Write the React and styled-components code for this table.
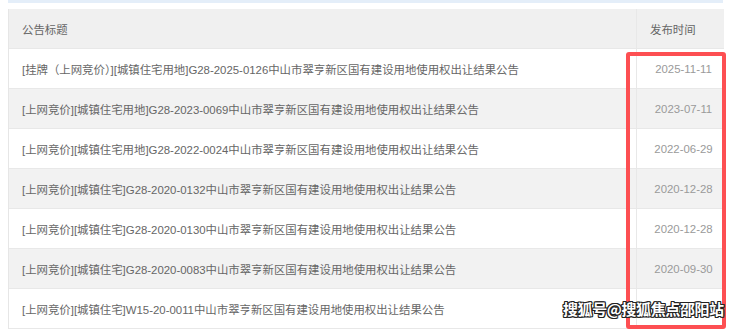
import styled, { createGlobalStyle } from "styled-components";

const GlobalStyle = createGlobalStyle`
    body {
        margin: 0;
        background: #fff;
        font-family: "Liberation Sans", "Noto Sans CJK SC", sans-serif;
    }
`

const Page = styled.div`
    position: relative;
    width: 740px;
    height: 330px;
    overflow: hidden;
    padding: 0 0 0 8px;
    box-sizing: border-box;
`

const TopStrip = styled.div`
    width: 715px;
    height: 3px;
    background: #e4eef9;
    margin-bottom: 6px;
`

const Table = styled.div`
    width: 715px;
    display: grid;
    grid-template-columns: 627px 88px;
    border-left: 1px solid #e6e6e6;
    border-right: 1px solid #e6e6e6;
    box-sizing: border-box;
`

const Cell = styled.div`
    height: 40px;
    display: flex;
    align-items: center;
    box-sizing: border-box;
    font-size: 11.4px;
    padding-top: 1px;
    white-space: nowrap;
    background: ${({$bg}) => $bg};
    border-bottom: 1px solid #e8e8e8;
    color: ${({$date}) => $date ? '#9a9a9a' : '#666'};
    padding-left: ${({$date}) => $date ? '6px' : '13px'};
    justify-content: ${({$date}) => $date ? 'center' : 'flex-start'};
    ${({$right}) => $right ? 'border-left: 1px solid #e8e8e8;' : ''}
`

const RedBox = styled.div`
    position: absolute;
    left: 626px;
    top: 52px;
    width: 100px;
    height: 277px;
    border: 4px solid #fd4f52;
    border-radius: 3px;
    box-sizing: border-box;
`

const Watermark = styled.div`
    position: absolute;
    left: 563px;
    top: 298px;
    font-size: 15px;
    font-weight: bold;
    white-space: nowrap;
    color: #fff;
    font-family: "Noto Sans CJK SC", sans-serif;
    letter-spacing: -0.4px;
    text-shadow: 1px 1px 0 #222, -1px -1px 0 #222, 1px -1px 0 #222, -1px 1px 0 #222, 0 1px 0 #222, 1px 0 0 #222, 0 -1px 0 #222, -1px 0 0 #222;
`

const rows = [
    ['[挂牌（上网竞价）][城镇住宅用地]G28-2025-0126中山市翠亨新区国有建设用地使用权出让结果公告', '2025-11-11'],
    ['[上网竞价][城镇住宅用地]G28-2023-0069中山市翠亨新区国有建设用地使用权出让结果公告', '2023-07-11'],
    ['[上网竞价][城镇住宅用地]G28-2022-0024中山市翠亨新区国有建设用地使用权出让结果公告', '2022-06-29'],
    ['[上网竞价][城镇住宅]G28-2020-0132中山市翠亨新区国有建设用地使用权出让结果公告', '2020-12-28'],
    ['[上网竞价][城镇住宅]G28-2020-0130中山市翠亨新区国有建设用地使用权出让结果公告', '2020-12-28'],
    ['[上网竞价][城镇住宅]G28-2020-0083中山市翠亨新区国有建设用地使用权出让结果公告', '2020-09-30'],
    ['[上网竞价][城镇住宅]W15-20-0011中山市翠亨新区国有建设用地使用权出让结果公告', '2020-01-03'],
]

export default function App() {
    return (
        <Page>
            <GlobalStyle />
            <TopStrip />
            <Table>
                <Cell $bg="#f0f0f0">公告标题</Cell>
                <Cell $bg="#f0f0f0" $right>发布时间</Cell>
                {rows.map(([title, date], i) => {
                    const bg = i % 2 ? '#f2f2f2' : '#fff'
                    return [
                        <Cell key={'t' + i} $bg={bg}>{title}</Cell>,
                        <Cell key={'d' + i} $bg={bg} $right $date>{date}</Cell>,
                    ]
                })}
            </Table>
            <RedBox />
            <Watermark>搜狐号@搜狐焦点邵阳站</Watermark>
        </Page>
    )
}
